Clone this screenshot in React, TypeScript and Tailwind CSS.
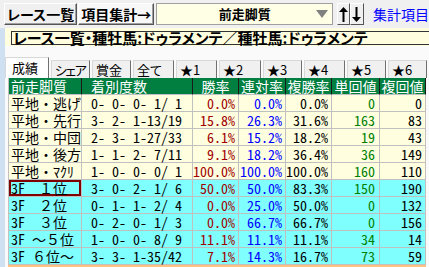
import React from "react";

const JP = { fontFamily: '"Noto Sans CJK JP", "Noto Sans", sans-serif' };
const MONO = { fontFamily: '"Noto Sans Mono CJK JP", "Noto Sans CJK JP", "DejaVu Sans Mono", monospace' };

type Row = [string, string, string, string, string, string, string];

const rows: Row[] = [
  ["平地・逃げ", "0- 0- 0- 1/ 1", "0.0%", "0.0%", "0.0%", "0", "0"],
  ["平地・先行", "3- 2- 1-13/19", "15.8%", "26.3%", "31.6%", "163", "83"],
  ["平地・中団", "2- 3- 1-27/33", "6.1%", "15.2%", "18.2%", "19", "43"],
  ["平地・後方", "1- 1- 2- 7/11", "9.1%", "18.2%", "36.4%", "36", "149"],
  ["平地・ﾏｸﾘ", "1- 0- 0- 0/ 1", "100.0%", "100.0%", "100.0%", "160", "110"],
  ["3F　１位", "3- 0- 2- 1/ 6", "50.0%", "50.0%", "83.3%", "150", "190"],
  ["3F　２位", "0- 1- 1- 2/ 4", "0.0%", "25.0%", "50.0%", "0", "132"],
  ["3F　３位", "0- 2- 0- 1/ 3", "0.0%", "66.7%", "66.7%", "0", "156"],
  ["3F ～５位", "1- 0- 0- 8/ 9", "11.1%", "11.1%", "11.1%", "34", "14"],
  ["3F ６位～", "3- 3- 1-35/42", "7.1%", "14.3%", "16.7%", "73", "59"],
];

const tabs = [
  { label: "成績", w: "w-[44px]", sel: true, ls: "" },
  { label: "シェア", w: "w-[39px]", ls: "tracking-[-1.5px]" },
  { label: "賞金", w: "w-[39px]", ls: "" },
  { label: "全て", w: "w-[41px]", ls: "" },
  { label: "★1", w: "w-[41px]", ls: "" },
  { label: "★2", w: "w-[42px]", ls: "" },
  { label: "★3", w: "w-[39px]", ls: "" },
  { label: "★4", w: "w-[41px]", ls: "" },
  { label: "★5", w: "w-[39px]", ls: "" },
  { label: "★6", w: "w-[39px]", ls: "" },
];

function Arrow({ up }: { up: boolean }) {
  return (
    <svg width="9" height="15" viewBox="0 0 9 15">
      {up ? (
        <g fill="#000">
          <polygon points="4.5,0 9,5 0,5" />
          <rect x="3.5" y="4" width="2" height="11" />
        </g>
      ) : (
        <g fill="#000">
          <polygon points="4.5,15 9,10 0,10" />
          <rect x="3.5" y="0" width="2" height="11" />
        </g>
      )}
    </svg>
  );
}

export default function App() {
  const colClasses = [
    "justify-start pl-[2px]",
    "justify-start pl-[9px]",
    "justify-end pr-[3px] text-[#a00000]",
    "justify-end pr-[3px] text-[#0000ff]",
    "justify-end pr-[3px] text-black",
    "justify-end pr-[4px] text-[#008000]",
    "justify-end pr-[3px] text-black",
  ];
  const headers = ["前走脚質", "着別度数", "勝率", "連対率", "複勝率", "単回値", "複回値"];
  const headClasses = [
    "justify-start pl-[2px]",
    "justify-start pl-[9px]",
    "justify-center",
    "justify-center",
    "justify-center",
    "justify-center",
    "justify-center",
  ];

  return (
    <div className="w-[429px] h-[267px] overflow-hidden bg-[#f0f0f0] flex flex-col" style={JP}>
      {/* top bar */}
      <div className="h-[28px] flex items-start pt-[3px] pl-[4px] shrink-0">
        <div className="w-[77px] h-[22px] flex items-center justify-center bg-[#f0f0f0] border border-t-white border-l-white border-r-[#555] border-b-[#555] shadow-[inset_-1px_-1px_0_#a0a0a0] text-[14px] font-bold text-black [font-feature-settings:'palt']">
          レース一覧
        </div>
        <div className="ml-[1px] w-[80px] h-[22px] flex items-center justify-center bg-[#f8f8f8] border border-t-white border-l-white border-r-[#555] border-b-[#555] shadow-[inset_-1px_-1px_0_#a0a0a0] text-[14px] font-bold text-black">
          項目集計→
        </div>
        <div className="ml-[2px] w-[186px] h-[22px] relative flex items-center justify-center bg-[#ffffe6] border border-[#a0a0a0] text-[13px] font-bold text-black">
          前走脚質
          <svg className="absolute right-[4px] top-[6px]" width="12" height="8" viewBox="0 0 12 8">
            <polygon points="0,0 12,0 6,8" fill="#808080" />
          </svg>
        </div>
        <div className="ml-[4px] w-[13px] h-[22px] flex items-center justify-center bg-[#f0f0f0] border border-t-white border-l-white border-r-[#555] border-b-[#555]">
          <Arrow up />
        </div>
        <div className="w-[15px] h-[22px] flex items-center justify-center bg-[#f0f0f0] border border-t-white border-l-white border-r-[#555] border-b-[#555]">
          <Arrow up={false} />
        </div>
        <div className="ml-[9px] h-[22px] flex items-center text-[14px] text-[#0000ff] whitespace-nowrap">
          集計項目
        </div>
      </div>

      {/* body */}
      <div className="flex flex-1 min-h-0">
        <div className="w-[5px] bg-[#cfe0f3] shrink-0" />
        <div className="flex-1 min-w-0 flex flex-col bg-[#fafafa]">
          {/* title band */}
          <div className="h-[18px] bg-[#ffffe0] pt-[3px] pl-[6px] shrink-0">
            <div className="h-[14px] border-l border-t border-b border-[#333] flex items-center pl-[1px] text-[15px] leading-[12px] font-bold text-black whitespace-nowrap [font-feature-settings:'palt']">
              レース一覧・種牡馬:ドゥラメンテ／種牡馬:ドゥラメンテ
            </div>
          </div>
          <div className="h-[9px] shrink-0" />
          {/* tabs */}
          <div className="h-[23px] flex items-end gap-[2px] shrink-0">
            {tabs.map((t) => (
              <div
                key={t.label}
                className={`${t.w} ${t.ls} ${t.sel ? "h-[21px] bg-white pl-[6px]" : "h-[18px] bg-[#f0f0f0] pl-[3px]"} shrink-0 flex items-center border-t border-l border-[#d8d8d8] border-r border-r-[#707070] text-[13px] leading-[14px] text-black whitespace-nowrap [font-feature-settings:'palt']`}
              >
                {t.label}
              </div>
            ))}
          </div>
          {/* table */}
          <div className="ml-[3px] flex flex-col" style={MONO}>
            <div className="grid grid-cols-[74px_111px_46px_47px_46px_48px_46px] w-[418px] text-[14px] leading-[14px]">
              {headers.map((h, i) => (
                <div
                  key={h}
                  className={`h-[17px] flex items-center bg-[#007f40] text-white border-r border-r-[#1a1a1a] border-b border-b-[#c0c0c0] ${i === 0 ? "border-l border-l-[#c0c0c0]" : ""} ${headClasses[i]}`}
                >
                  {h}
                </div>
              ))}
              {rows.map((r, ri) =>
                r.map((c, ci) => (
                  <div
                    key={`${ri}-${ci}`}
                    className={`h-[17px] flex items-center whitespace-pre border-r border-b border-[#c0c0c0] ${ci === 0 ? "border-l border-l-[#c0c0c0]" : ""} ${ri < 5 ? "bg-[#ffffe0]" : "bg-[#80ffff]"} ${colClasses[ci]} ${ri === 5 && ci === 0 ? "shadow-[inset_0_0_0_2px_#800000]" : ""}`}
                  >
                    {c}
                  </div>
                ))
              )}
            </div>
            <div className="h-[3px] w-[418px] bg-[#ffc080]" />
          </div>
        </div>
      </div>
    </div>
  );
}
